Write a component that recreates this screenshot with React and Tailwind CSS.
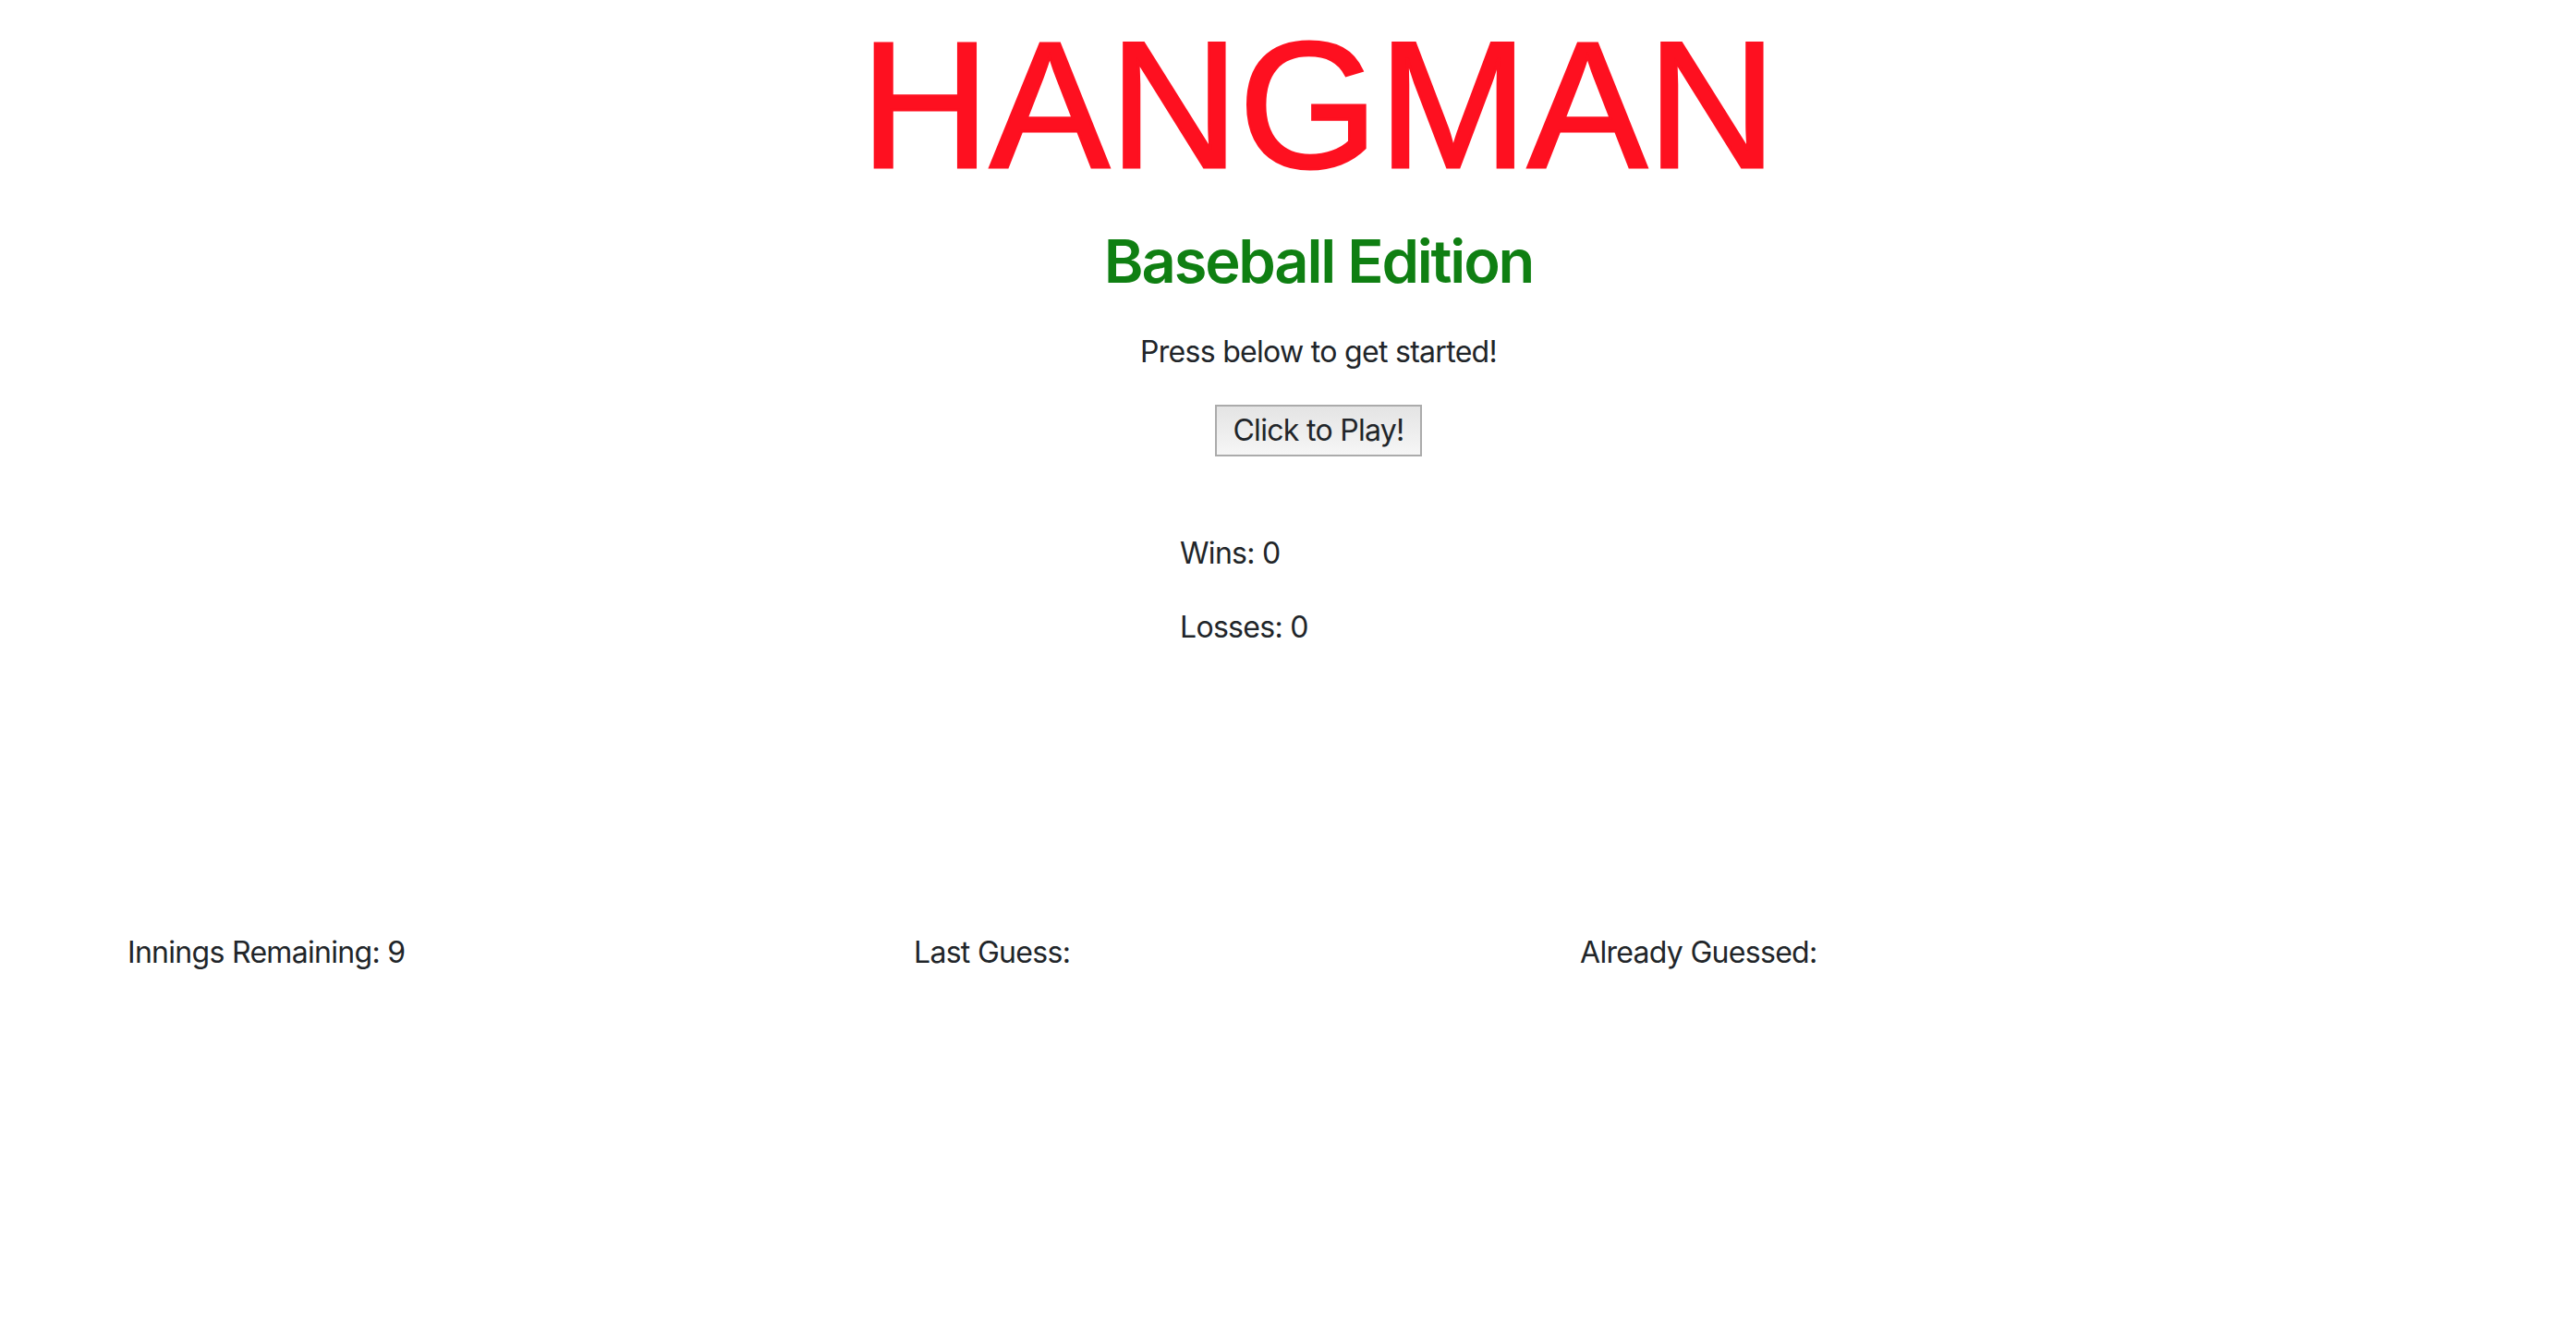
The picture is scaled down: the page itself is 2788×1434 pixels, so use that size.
import React, { useState } from 'react';

const App = () => {
  const [wins] = useState(0);
  const [losses] = useState(0);
  const [innings] = useState(9);

  return (
    <div className="min-h-screen w-full bg-white text-[#212529] font-['Inter','Liberation_Sans',sans-serif] tracking-[-0.7px]">
      {/* Header / start area */}
      <div className="flex flex-col items-center pl-[66px]">
        <h1 className="pt-[16px] text-[194px] leading-[196px] font-normal tracking-normal text-[#fe1020] [-webkit-text-stroke:3px_#fe1020] font-['Liberation_Sans','Arial',sans-serif]">
          HANGMAN
        </h1>
        <h2 className="mt-[38px] text-[65px] leading-[66px] font-semibold tracking-[-2.2px] text-[#0f7f12]">
          Baseball Edition
        </h2>
        <p className="mt-[41px] text-[32px] leading-[48px]">Press below to get started!</p>
        <button className="mt-[33px] px-[17px] py-[2px] text-[32px] leading-[48px] border-2 border-[#ababab] bg-gradient-to-b from-[#e4e4e4] to-[#f6f6f6] text-[#212529]">
          Click to Play!
        </button>
      </div>

      {/* Score */}
      <div className="mt-[81px] pl-[1277px] text-[32px] leading-[48px]">
        <p>Wins: {wins}</p>
        <p className="mt-[32px]">Losses: {losses}</p>
      </div>

      {/* Game status row */}
      <div className="mt-[304px] flex pl-[138px] text-[32px] leading-[48px]">
        <div className="w-[851px]">Innings Remaining: {innings}</div>
        <div className="w-[721px]">Last Guess:</div>
        <div>Already Guessed:</div>
      </div>
    </div>
  );
};

export default App;
